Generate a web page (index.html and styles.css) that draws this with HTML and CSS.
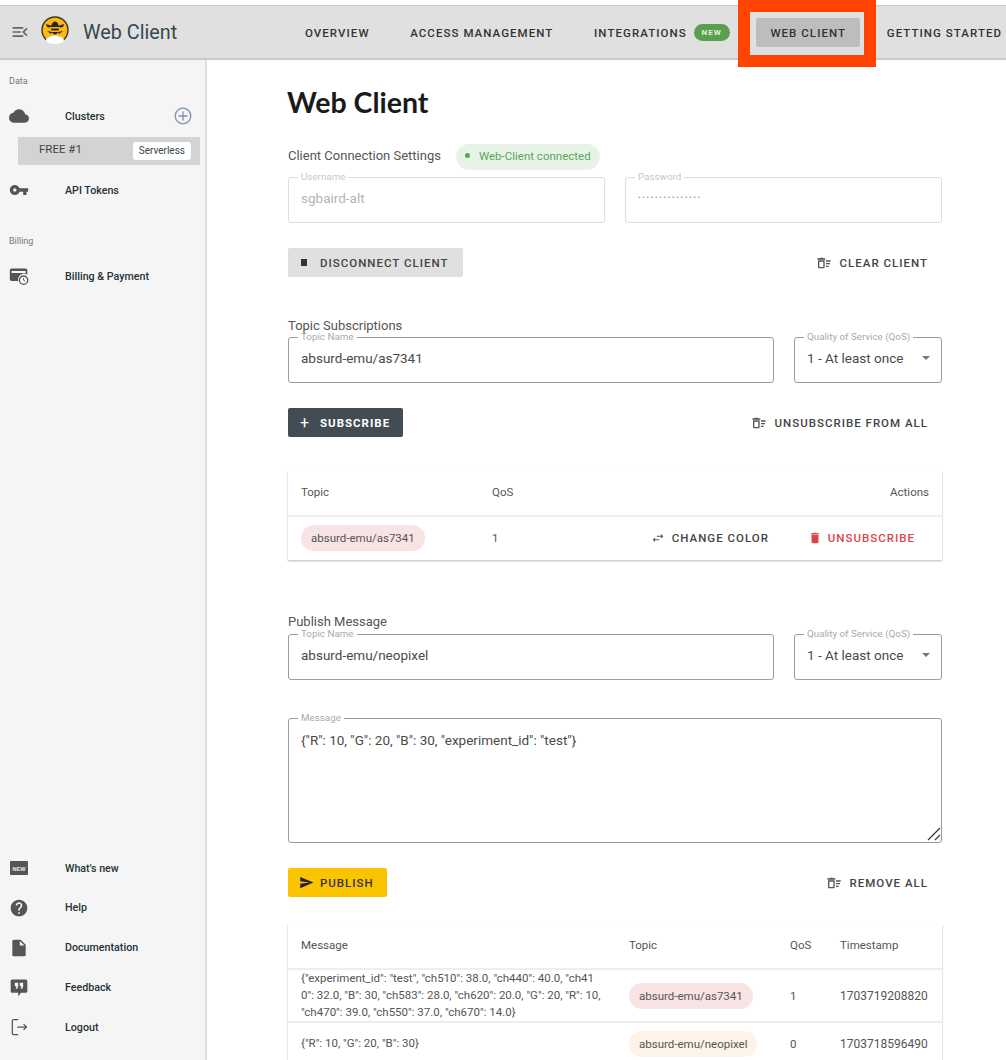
FILE: index.html
```html
<!DOCTYPE html>
<html lang="en">
<head>
    <meta charset="UTF-8">
    <meta name="viewport" content="width=device-width, initial-scale=1.0">
    <title>Web Client</title>
    <link rel="stylesheet" href="styles.css">
</head>
<body>
    <svg class="sprite" width="0" height="0">
        <symbol id="i-sweep" viewBox="0 0 24 24"><path d="M15 16h4v2h-4zm0-8h7v2h-7zm0 4h6v2h-6zM3 18c0 1.1.9 2 2 2h6c1.1 0 2-.9 2-2V8H3v10zm2-8h6v8H5v-8zm5-6H6L5 5H2v2h12V5h-3z"/></symbol>
    </svg>

    <header class="topbar">
        <div class="brand">
            <svg class="menu-icon" viewBox="0 0 24 24"><path d="M3 18h13v-2H3v2zm0-5h10v-2H3v2zm0-7v2h13V6H3zm18 9.6L17.4 12 21 8.4 19.6 7l-5 5 5 5z"/></svg>
            <svg class="logo" viewBox="0 0 28 30">
                <circle cx="14" cy="14" r="13" fill="#fdb913" stroke="#3c3524" stroke-width="1.4"/>
                <path d="M5 25c0-3 3-4.500 5-4.500 1-1.500 7-1.500 8 0 2 0 5 1.500 5 4.500 0 2-5 3.500-9 3.500S5 27 5 25z" fill="#fff" stroke="#cfcfcf" stroke-width=".6"/>
                <ellipse cx="14" cy="12" rx="4" ry="6.500" fill="#2b2418"/>
                <path d="M5 8l6 2v2L6 11zM23 8l-6 2v2l5-1z" fill="#2b2418"/>
                <path d="M9 11h10v1.500H9zM9 14.500h10V16H9z" fill="#fdb913"/>
                <path d="M6 15l5 1-1 2zM22 15l-5 1 1 2z" fill="#2b2418"/>
            </svg>
            <span class="brand-title">Web Client</span>
        </div>
        <nav class="topnav">
            <a class="topnav-item">OVERVIEW</a>
            <a class="topnav-item">ACCESS MANAGEMENT</a>
            <a class="topnav-item">INTEGRATIONS <span class="new-pill">NEW</span></a>
            <a class="topnav-item active">WEB CLIENT</a>
            <a class="topnav-item">GETTING STARTED</a>
        </nav>
        <div class="highlight-box"></div>
    </header>

    <div class="layout">
        <aside class="sidebar">
            <div class="side-label">Data</div>
            <div class="side-item">
                <svg class="side-icon" viewBox="0 0 24 24"><path d="M19.35 10.04C18.67 6.59 15.64 4 12 4 9.11 4 6.6 5.64 5.35 8.04 2.34 8.36 0 10.91 0 14c0 3.31 2.69 6 6 6h13c2.76 0 5-2.24 5-5 0-2.64-2.05-4.78-4.65-4.96z"/></svg>
                <span>Clusters</span>
                <svg class="add-icon" viewBox="0 0 18 18"><circle cx="9" cy="9" r="7.800"/><path d="M9 4.500v9M4.500 9h9"/></svg>
            </div>
            <div class="cluster-row">
                <span>FREE #1</span>
                <span class="cluster-tag">Serverless</span>
            </div>
            <div class="side-item">
                <svg class="side-icon" viewBox="0 0 24 24"><path d="M12.65 10C11.83 7.67 9.61 6 7 6c-3.31 0-6 2.69-6 6s2.690 6 6 6c2.610 0 4.830-1.670 5.650-4H17v4h4v-4h2v-4H12.650zM7 14c-1.100 0-2-.9-2-2s.9-2 2-2 2 .9 2 2-.9 2-2 2z"/></svg>
                <span>API Tokens</span>
            </div>
            <div class="side-label billing-label">Billing</div>
            <div class="side-item">
                <svg class="side-icon" viewBox="0 0 24 24"><path d="M3 3h17c1.100 0 2 .9 2 2v5.500a7 7 0 0 0-10.800 7.500H3c-1.100 0-2-.9-2-2V5c0-1.100.9-2 2-2zm0 3v2.500h17V6z" fill-rule="evenodd"/><circle cx="17.500" cy="17" r="5" fill="none" stroke="#555" stroke-width="1.600"/><path d="M17.500 14.500V17l1.800 1.300" fill="none" stroke="#555" stroke-width="1.200"/></svg>
                <span>Billing &amp; Payment</span>
            </div>

            <div class="side-bottom">
                <div class="side-item">
                    <svg class="side-icon" viewBox="0 0 20 20"><rect x="1" y="3" width="18" height="14" rx="1"/><text x="10" y="12.500" class="new-mark">NEW</text></svg>
                    <span>What's new</span>
                </div>
                <div class="side-item">
                    <svg class="side-icon" viewBox="0 0 24 24"><path d="M12 2C6.480 2 2 6.480 2 12s4.480 10 10 10 10-4.480 10-10S17.520 2 12 2zm1 17h-2v-2h2v2zm2.070-7.750l-.9.920C13.450 12.900 13 13.500 13 15h-2v-.5c0-1.100.45-2.100 1.170-2.830l1.240-1.260c.37-.36.59-.86.59-1.410 0-1.100-.9-2-2-2s-2 .9-2 2H8c0-2.210 1.790-4 4-4s4 1.790 4 4c0 .88-.36 1.680-.93 2.250z"/></svg>
                    <span>Help</span>
                </div>
                <div class="side-item">
                    <svg class="side-icon" viewBox="0 0 24 24"><path d="M6 2c-1.100 0-1.990.9-1.990 2L4 20c0 1.100.89 2 1.990 2H18c1.100 0 2-.9 2-2V8l-6-6H6zm7 7V3.500L18.500 9H13z"/></svg>
                    <span>Documentation</span>
                </div>
                <div class="side-item">
                    <svg class="side-icon" viewBox="0 0 24 24"><path fill-rule="evenodd" d="M4 3h16c1.100 0 2 .9 2 2v12c0 1.100-.9 2-2 2h-5.500L11 23v-4H4c-1.100 0-2-.9-2-2V5c0-1.100.9-2 2-2zm3 4v4h2l-1 3h2l1-3V7zm6 0v4h2l-1 3h2l1-3V7z"/></svg>
                    <span>Feedback</span>
                </div>
                <div class="side-item">
                    <svg class="side-icon logout-icon" viewBox="0 0 24 24"><path d="M11 3H5.500C4.700 3 4 3.700 4 4.500v15c0 .8.7 1.500 1.500 1.500H11M10 12h11M17.500 8.500 21 12l-3.500 3.500"/></svg>
                    <span>Logout</span>
                </div>
            </div>
        </aside>

        <main class="content">
            <h1>Web Client</h1>

            <div class="status-row">
                <span class="section-title">Client Connection Settings</span>
                <span class="status-pill"><i class="status-dot"></i>Web-Client connected</span>
            </div>
            <div class="field-row connect-fields">
                <fieldset class="field disabled">
                    <legend>Username</legend>
                    <div class="field-value">sgbaird-alt</div>
                </fieldset>
                <fieldset class="field disabled">
                    <legend>Password</legend>
                    <div class="field-value dots">•••••••••••••••</div>
                </fieldset>
            </div>
            <div class="action-row first-actions">
                <button class="btn btn-grey"><i class="stop-icon"></i>DISCONNECT CLIENT</button>
                <button class="btn btn-text"><svg class="btn-icon sweep"><use href="#i-sweep"/></svg>CLEAR CLIENT</button>
            </div>

            <div class="section-title block-title">Topic Subscriptions</div>
            <div class="field-row">
                <fieldset class="field grow">
                    <legend>Topic Name</legend>
                    <div class="field-value">absurd-emu/as7341</div>
                </fieldset>
                <fieldset class="field qos">
                    <legend>Quality of Service (QoS)</legend>
                    <div class="field-value select-value">1 - At least once<i class="caret"></i></div>
                </fieldset>
            </div>
            <div class="action-row">
                <button class="btn btn-dark"><span class="plus">+</span>SUBSCRIBE</button>
                <button class="btn btn-text"><svg class="btn-icon sweep"><use href="#i-sweep"/></svg>UNSUBSCRIBE FROM ALL</button>
            </div>

            <table class="data-table subs-table">
                <thead>
                    <tr><th class="col-topic">Topic</th><th>QoS</th><th class="right">Actions</th></tr>
                </thead>
                <tbody>
                    <tr>
                        <td><span class="chip chip-red">absurd-emu/as7341</span></td>
                        <td>1</td>
                        <td class="right row-actions">
                            <button class="btn btn-text btn-small"><svg class="btn-icon swap" viewBox="0 0 24 24"><path d="M6.990 11L3 15l3.990 4v-3H14v-2H6.990v-3zM21 9l-3.990-4v3H10v2h7.010v3L21 9z"/></svg>CHANGE COLOR</button>
                            <button class="btn btn-text btn-small btn-danger"><svg class="btn-icon trash" viewBox="0 0 24 24"><path d="M6 19c0 1.100.9 2 2 2h8c1.100 0 2-.9 2-2V7H6v12zM19 4h-3.500l-1-1h-5l-1 1H5v2h14V4z"/></svg>UNSUBSCRIBE</button>
                        </td>
                    </tr>
                </tbody>
            </table>

            <div class="section-title publish-title">Publish Message</div>
            <div class="field-row">
                <fieldset class="field grow">
                    <legend>Topic Name</legend>
                    <div class="field-value">absurd-emu/neopixel</div>
                </fieldset>
                <fieldset class="field qos">
                    <legend>Quality of Service (QoS)</legend>
                    <div class="field-value select-value">1 - At least once<i class="caret"></i></div>
                </fieldset>
            </div>
            <fieldset class="field message-field">
                <legend>Message</legend>
                <div class="field-value">{"R": 10, "G": 20, "B": 30, "experiment_id": "test"}</div>
                <svg class="resize-handle" viewBox="0 0 14 14"><path d="M1 13 13 1M8 13l5-5"/></svg>
            </fieldset>
            <div class="action-row">
                <button class="btn btn-yellow"><svg class="btn-icon send" viewBox="0 0 24 24"><path d="M2.010 21L23 12 2.010 3 2 10l15 2-15 2z"/></svg>PUBLISH</button>
                <button class="btn btn-text"><svg class="btn-icon sweep"><use href="#i-sweep"/></svg>REMOVE ALL</button>
            </div>

            <table class="data-table msg-table">
                <thead>
                    <tr><th class="col-msg">Message</th><th class="col-msg-topic">Topic</th><th class="col-qos">QoS</th><th>Timestamp</th></tr>
                </thead>
                <tbody>
                    <tr>
                        <td class="msg-cell">{"experiment_id": "test", "ch510": 38.0, "ch440": 40.0, "ch41<br>0": 32.0, "B": 30, "ch583": 28.0, "ch620": 20.0, "G": 20, "R": 10,<br>"ch470": 39.0, "ch550": 37.0, "ch670": 14.0}</td>
                        <td><span class="chip chip-red">absurd-emu/as7341</span></td>
                        <td>1</td>
                        <td class="stamp">1703719208820</td>
                    </tr>
                    <tr>
                        <td class="msg-cell">{"R": 10, "G": 20, "B": 30}</td>
                        <td><span class="chip chip-cream">absurd-emu/neopixel</span></td>
                        <td>0</td>
                        <td class="stamp">1703718596490</td>
                    </tr>
                </tbody>
            </table>
        </main>
    </div>
</body>
</html>
```

FILE: styles.css
```css
* {
    box-sizing: border-box;
}
html, body {
    height: 1060px;
    overflow: hidden;
}
body {
    margin: 0;
    padding-top: 5px;
    font-family: Roboto, "Liberation Sans", sans-serif;
    background-color: white;
    color: #444;
    display: flex;
    flex-direction: column;
}
.sprite {
    position: absolute;
}

/* top bar */
.topbar {
    position: relative;
    flex: none;
    height: 55px;
    display: flex;
    align-items: center;
    background-color: #e0e0e0;
    border-top: 1px solid #c8c8c8;
    border-bottom: 2px solid #c9c9c9;
}
.brand {
    display: flex;
    align-items: center;
    width: 291px;
    flex: none;
    padding-left: 10px;
}
.menu-icon {
    width: 20px;
    height: 20px;
    fill: #666;
}
.logo {
    width: 28px;
    height: 30px;
    margin-left: 11px;
    margin-top: -3px;
}
.brand-title {
    margin-left: 14px;
    font-size: 19.800px;
    color: #37474f;
}
.topnav {
    display: flex;
    align-items: center;
    gap: 12.670px;
}
.topnav-item {
    flex: none;
    display: flex;
    align-items: center;
    height: 29px;
    padding: 1px 14px 0;
    font-size: 11.500px;
    font-weight: 500;
    letter-spacing: 1.050px;
    color: #333;
    white-space: nowrap;
}
.topnav-item.active {
    background-color: #bdbdbd;
    border-radius: 2px;
}
.new-pill {
    display: inline-block;
    margin-left: 7px;
    width: 36px;
    height: 17px;
    line-height: 17px;
    text-align: center;
    border-radius: 9px;
    background-color: #5a9e50;
    color: #dff0d8;
    font-size: 8px;
    font-weight: 700;
}
.highlight-box {
    position: absolute;
    left: 738px;
    top: -6px;
    width: 138px;
    height: 67px;
    border: 12px solid #ff4400;
}

/* sidebar */
.layout {
    flex: 1;
    display: flex;
    min-height: 0;
}
.sidebar {
    flex: none;
    width: 207px;
    display: flex;
    flex-direction: column;
    padding: 14px 0 13px;
    background-color: #f5f5f5;
    border-right: 2px solid #dedede;
}
.side-label {
    height: 14px;
    line-height: 14px;
    padding-left: 9px;
    margin-bottom: 8px;
    font-size: 9px;
    color: #777;
}
.billing-label {
    margin-top: 24px;
}
.side-item {
    display: flex;
    align-items: center;
    height: 40px;
    padding-left: 9px;
    font-size: 10.700px;
    font-weight: 500;
    color: #263238;
}
.side-bottom .side-item {
    height: 39.750px;
}
.side-icon {
    width: 20px;
    height: 20px;
    margin-right: 36px;
    fill: #555;
    flex: none;
}
.new-mark {
    font-family: "Liberation Sans", sans-serif;
    font-size: 5.500px;
    font-weight: 700;
    fill: #eee;
    text-anchor: middle;
}
.logout-icon {
    fill: none;
    stroke: #555;
    stroke-width: 1.500;
}
.add-icon {
    width: 18px;
    height: 18px;
    margin-left: auto;
    margin-right: 13px;
    fill: none;
    stroke: #7f93ae;
    stroke-width: 1.300;
}
.cluster-row {
    display: flex;
    align-items: center;
    justify-content: space-between;
    height: 28px;
    margin: 1px 5px 5px 18px;
    padding: 0 9px 0 21px;
    background-color: #d3d3d3;
    font-size: 11.500px;
    color: #444;
}
.cluster-row span:first-child {
    margin-top: -5px;
}
.cluster-tag {
    padding: 0 6px;
    height: 18px;
    line-height: 18px;
    border-radius: 3px;
    background-color: white;
    font-size: 10px;
    color: #37474f;
}
.side-bottom {
    margin-top: auto;
}

/* main column */
.content {
    flex: none;
    width: 654px;
    margin-left: 81px;
    padding-top: 26px;
}
h1 {
    margin: 0 0 0 -1px;
    height: 32px;
    line-height: 32px;
    font-family: Lato, sans-serif;
    font-size: 28.500px;
    font-weight: 700;
    color: #1a1a1a;
}
.section-title {
    font-size: 13px;
    color: #555;
}
.status-row {
    display: flex;
    align-items: center;
    gap: 15px;
    margin-top: 26px;
}
.status-row .section-title {
    margin-top: -4px;
}
.status-pill {
    display: flex;
    align-items: center;
    height: 26px;
    padding: 0 9px 3px;
    border-radius: 13px;
    background-color: #e8f3e8;
    font-size: 11.500px;
    color: #5aa75a;
}
.status-dot {
    width: 5px;
    height: 5px;
    margin-right: 9px;
    border-radius: 50%;
    background-color: #4caf50;
}
.block-title {
    height: 12px;
    line-height: 12px;
    margin-top: 43px;
}
.publish-title {
    height: 12px;
    line-height: 12px;
    margin-top: 56px;
    margin-bottom: 1px;
}

/* outlined fields */
.field-row {
    display: flex;
    gap: 20px;
}
.connect-fields {
    margin-top: 2px;
}
.connect-fields .field {
    flex: 1;
}
.field {
    position: relative;
    min-width: 0;
    height: 51px;
    margin: 0;
    padding: 8px 12px 0;
    border: 1px solid #9c9c9c;
    border-radius: 3px;
}
.field legend {
    margin-left: -3px;
    padding: 0 3px;
    height: 10px;
    line-height: 10px;
    font-size: 9.800px;
    color: #aaa;
    white-space: nowrap;
}
.field-value {
    height: 16px;
    line-height: 16px;
    font-size: 13.500px;
    color: #4a4a4a;
}
.field.disabled {
    border-color: #ddd;
}
.field.disabled legend {
    color: #c8c8c8;
}
.field.disabled .field-value {
    color: #b5b5b5;
}
.field.disabled .dots {
    font-size: 7px;
    letter-spacing: 1.900px;
    color: #8c8c8c;
}
.grow {
    flex: 1;
}
.qos {
    flex: none;
    width: 148px;
}
.select-value {
    display: flex;
    align-items: center;
    justify-content: space-between;
    white-space: nowrap;
}
.caret {
    width: 0;
    height: 0;
    margin-right: -1px;
    border-left: 4px solid transparent;
    border-right: 4px solid transparent;
    border-top: 4px solid #777;
}
.message-field {
    height: 130px;
    margin-top: 33px;
    padding-top: 9px;
    width: 100%;
}
.resize-handle {
    position: absolute;
    right: 0;
    bottom: 1px;
    width: 14px;
    height: 14px;
    fill: none;
    stroke: #333;
    stroke-width: 1.200;
}

/* buttons */
.action-row {
    display: flex;
    align-items: center;
    justify-content: space-between;
    margin-top: 25px;
}
.btn {
    display: inline-flex;
    align-items: center;
    height: 29px;
    padding: 0 13px;
    border: none;
    border-radius: 2px;
    background: none;
    font-family: inherit;
    font-size: 11.500px;
    font-weight: 500;
    letter-spacing: 1px;
    color: #444;
    white-space: nowrap;
    cursor: pointer;
}
.btn-grey {
    background-color: #e0e0e0;
    padding-right: 15px;
}
.btn-dark {
    background-color: #434b55;
    color: white;
    font-weight: 700;
    padding-left: 12px;
}
.btn-yellow {
    background-color: #fac400;
    color: #333;
    padding-left: 11px;
}
.btn-text {
    padding: 0 14px 0 0;
}
.btn-danger {
    color: #d9454a;
}
.btn-icon {
    flex: none;
    width: 14px;
    height: 14px;
    margin-right: 8px;
    fill: #555;
}
.sweep {
    width: 16px;
    height: 16px;
}
.stop-icon {
    width: 6px;
    height: 7px;
    margin-right: 13px;
    background-color: #333;
}
.plus {
    width: 10px;
    margin-right: 10px;
    font-size: 16px;
    font-weight: 400;
    line-height: 1;
}
.send {
    width: 15px;
    height: 15px;
    margin-right: 6px;
    fill: #222;
}
.swap {
    margin-right: 7px;
}
.trash {
    margin-right: 6px;
    fill: #d9454a;
}

/* tables */
.data-table {
    width: 100%;
    margin-top: 34px;
    border-collapse: collapse;
    table-layout: fixed;
    font-size: 11.500px;
    color: #555;
    box-shadow: 0 1px 2px rgba(0, 0, 0, .28);
}
.data-table th {
    height: 45px;
    padding: 0 13px 2px;
    font-weight: 400;
    text-align: left;
    border-bottom: 2px solid #eee;
    color: #555;
}
.data-table td {
    padding: 0 13px 2px;
    height: 44px;
}
.data-table .right {
    text-align: right;
}
.chip {
    display: inline-block;
    height: 26px;
    line-height: 26px;
    padding: 0 10px;
    border-radius: 13px;
    white-space: nowrap;
}
.chip-red {
    background-color: #f8e4e4;
}
.chip-cream {
    background-color: #fdf3e8;
}
.col-topic {
    width: 191px;
}
.subs-table th:nth-child(2) {
    width: 120px;
}
.row-actions {
    white-space: nowrap;
}
.btn-small {
    padding: 0;
    margin-left: 36px;
}
.subs-table .row-actions {
    padding-right: 27px;
}
.msg-table {
    margin-top: 27px;
}
.col-msg {
    width: 341px;
}
.col-msg-topic {
    width: 161px;
}
.col-qos {
    width: 50px;
}
.msg-table th, .msg-table td {
    padding: 0 0 2px 13px;
}
.msg-table td:nth-child(n+2), .msg-table th:nth-child(n+2) {
    padding-left: 0;
}
.msg-table tr:first-child td {
    height: 53px;
    padding-bottom: 0;
    border-bottom: 2px solid #eee;
}
.msg-table .msg-cell {
    line-height: 17px;
    white-space: nowrap;
}
.msg-table .stamp {
    font-size: 12px;
}
```
